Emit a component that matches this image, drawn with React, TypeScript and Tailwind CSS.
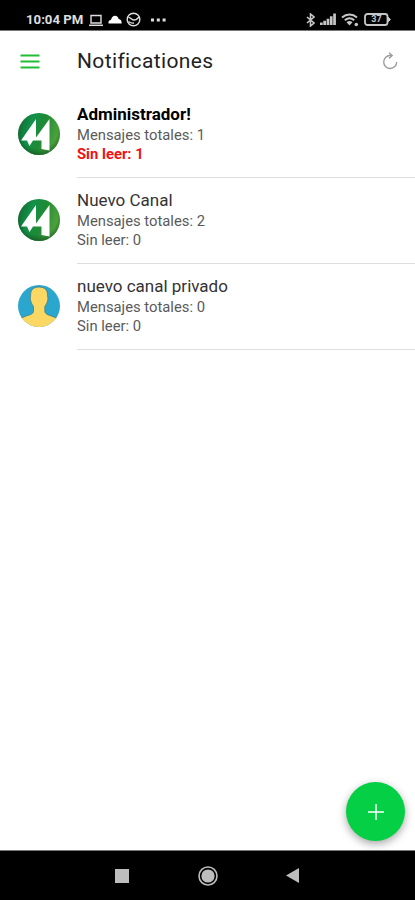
import { clsx } from 'clsx'

interface Channel {
  id: number
  name: string
  total: number
  unread: number
  avatar: 'logo' | 'person'
}

const channels: Channel[] = [
  { id: 1, name: 'Administrador!', total: 1, unread: 1, avatar: 'logo' },
  { id: 2, name: 'Nuevo Canal', total: 2, unread: 0, avatar: 'logo' },
  { id: 3, name: 'nuevo canal privado', total: 0, unread: 0, avatar: 'person' },
]

function LogoAvatar({ id }: { id: number }) {
  return (
    <svg className="size-[42px]" viewBox="0 0 42 42">
      <defs>
        <linearGradient id={`logo-${id}`} x1="0" y1="0" x2="1" y2="0.3">
          <stop offset="0" stopColor="#14602a" />
          <stop offset="0.35" stopColor="#12914a" />
          <stop offset="0.65" stopColor="#1f8a35" />
          <stop offset="1" stopColor="#4da33b" />
        </linearGradient>
        <radialGradient id={`shade-${id}`} cx="0.5" cy="0.42" r="0.58">
          <stop offset="0.75" stopColor="#0c4a1c" stopOpacity="0" />
          <stop offset="1" stopColor="#0c4a1c" stopOpacity="0.6" />
        </radialGradient>
      </defs>
      <circle cx="21" cy="21" r="21" fill={`url(#logo-${id})`} />
      <circle cx="21" cy="21" r="21" fill={`url(#shade-${id})`} />
      <path d="M18 6v18.500L31.500 6v31.500L23.500 36v-8.500H15L11.500 33 9 27.500H3z" fill="#fff" />
    </svg>
  )
}

function PersonAvatar() {
  return (
    <svg className="size-[42px]" viewBox="0 0 42 42">
      <defs>
        <clipPath id="person">
          <circle cx="21" cy="21" r="21" />
        </clipPath>
      </defs>
      <g clipPath="url(#person)">
        <path d="M0 0h42v42H0z" fill="#2ba6cf" />
        <path
          d="M21 2c6 0 8.800 3.500 8.500 8.500-.1 1.500.8 2.500.3 4.500-.5 2.500-1.500 4.500-3 6.500v5c.5 2.500 2.500 3 5.700 4.200 3.500 1.200 6 2.300 9.500 4.300v9H0v-9c3-2 5.500-3.100 9-4.300 3.500-1.200 6-1.700 6.500-4.200v-5c-1.500-2-2.500-4-3-6.500-.5-2 .2-3 .1-4.500C12.300 5.500 15 2 21 2z"
          fill="#fbd763"
          stroke="#3f7f86"
          strokeWidth="0.8"
        />
      </g>
    </svg>
  )
}

function StatusBar() {
  return (
    <div className="flex h-[31px] items-start justify-between border-b border-[#777] bg-black pt-[10px] pr-[24px] pl-[26px] text-[#dedede]">
      <div className="flex h-[19px] items-center">
        <span className="w-[58px] text-[13.2px] leading-[19px] font-bold whitespace-nowrap">10:04 PM</span>
        <svg className="ml-[4px] h-[14px] w-[16px]" viewBox="0 0 16 14" fill="none" stroke="currentColor">
          <path d="M3 2.500h10v7.500H3z" strokeWidth="1.400" />
          <path d="M1 12.300h14" strokeWidth="1.500" />
        </svg>
        <svg className="ml-[4px] h-[9px] w-[14px]" viewBox="0 0 14 9">
          <path d="M.5 8.500C.2 6.200 1 5 3 4.700 4 1.700 5 .7 7 .7c2.200 0 3.200 1.700 3.700 3.300 2 .3 3 1.800 3 4.500z" fill="#fff" />
        </svg>
        <svg className="ml-[4px] size-[15px]" viewBox="0 0 15 15" fill="none" stroke="currentColor">
          <circle cx="7.500" cy="7.500" r="6.300" strokeWidth="1.400" />
          <path d="M2.500 5l4.500 2.800c2 .8 4-.3 6-2.800M2.500 9.500c2 1.500 3.500 2 5.500 1.500" strokeWidth="1.400" />
        </svg>
        <svg className="ml-[10px] h-[4px] w-[15px]" viewBox="0 0 15 4" fill="currentColor">
          <path d="M0 .5h3v3H0zM5.800.5h3v3h-3zM11.600.5h3v3h-3z" />
        </svg>
      </div>

      <div className="flex h-[19px] items-center text-[#c6c6c6]">
        <svg className="h-[14px] w-[9px]" viewBox="0 0 9 14" fill="none" stroke="currentColor" strokeWidth="1.600">
          <path d="M1 4l7 6-3.500 3V1L8 4l-7 6" />
        </svg>
        <svg className="ml-[5px] h-[13px] w-[16px]" viewBox="0 0 16 13" fill="currentColor">
          <path d="M0 9.500h2.700V12H0zM3.300 7.800H6V12H3.300zM6.600 5.800h2.700V12H6.600zM9.900 3.300h2.700V12H9.900zM13.200.5h2.700V12h-2.700z" />
        </svg>
        <svg className="ml-[5px] h-[14px] w-[18px]" viewBox="0 0 18 14" fill="none" stroke="currentColor" strokeWidth="2">
          <path d="M1 4.500c4.500-4 10.500-4 15 0M3.800 7.300c3-2.500 6.500-2.500 9.400 0" />
          <path d="M5.500 9.200c2-1.600 4-1.600 6 0l-3 3.300z" fill="currentColor" stroke="none" />
          <circle cx="15.300" cy="11.500" r="1.800" fill="currentColor" stroke="none" />
        </svg>
        <div className="relative ml-[5px] flex h-[13px] w-[27px] items-center">
          <svg className="h-[13px] w-[27px]" viewBox="0 0 27 13" fill="none" stroke="currentColor">
            <rect x="1" y="1" width="22.500" height="11" rx="2.500" strokeWidth="1.800" />
            <path d="M24 4l2.500 2.500L24 9z" fill="currentColor" />
          </svg>
          <span className="absolute inset-y-0 left-0 w-[25px] text-center text-[9px] leading-[13px] font-bold">37</span>
        </div>
      </div>
    </div>
  )
}

function ChannelRow({ channel }: { channel: Channel }) {
  const hasUnread = channel.unread > 0
  return (
    <li className="flex h-[86px] pl-[18px]">
      <div className="w-[59px] pt-[21px]">
        {channel.avatar === 'logo' ? <LogoAvatar id={channel.id} /> : <PersonAvatar />}
      </div>
      <div className="flex-1 border-b border-[#dedede] pt-[12px] text-[14.8px] leading-[20px] text-[#5a5a5a]">
        <h2 className={clsx('mb-px text-[17px]', hasUnread ? 'font-bold text-black' : 'text-[#333]')}>{channel.name}</h2>
        <p>Mensajes totales: {channel.total}</p>
        <p className={clsx('-mt-px', hasUnread && 'font-bold text-[#f01212]')}>Sin leer: {channel.unread}</p>
      </div>
    </li>
  )
}

export default function App() {
  return (
    <div className="flex h-[900px] w-[415px] flex-col bg-white font-[Roboto,sans-serif]">
      <StatusBar />

      <header className="flex h-[61px] items-center pr-[17px] pb-[2px] pl-[20px]">
        <svg className="mt-[1px] h-[15px] w-[20px]" viewBox="0 0 20 15" stroke="#22bd37" strokeWidth="2">
          <path d="M0.500 1.500h19M0.500 7.500h19M0.500 13.500h19" />
        </svg>
        <h1 className="ml-[37px] flex-1 text-[21px] leading-[24px] tracking-[0.37px] text-[#222]">Notificationes</h1>
        <svg className="mt-[1px] h-[18px] w-[16px]" viewBox="0 0 16 18" fill="none" stroke="#999" strokeWidth="1.300">
          <path d="M9.500 3.500H8a6.500 6.500 0 1 0 6.700 6.500" />
          <path d="M7 .8l3.200 2.700L7 6.500" />
        </svg>
      </header>

      <ul>
        {channels.map((channel) => (
          <ChannelRow key={channel.id} channel={channel} />
        ))}
      </ul>

      {/* Add channel button */}
      <div className="flex flex-1 items-end justify-end pr-[10px] pb-[9px]">
        <button className="flex size-[59px] items-center justify-center rounded-full bg-[#04cf45] shadow-[0_3px_8px_rgba(0,0,0,0.35)]">
          <svg className="size-[16px]" viewBox="0 0 16 16" stroke="#fff" strokeWidth="1.500">
            <path d="M8 0v16M0 8h16" />
          </svg>
        </button>
      </div>

      {/* Android navigation */}
      <nav className="flex h-[50px] items-center border-t border-[#777] bg-black pl-[115px] text-[#bdbdbd]">
        <div className="size-[14px] bg-[#bdbdbd]" />
        <svg className="ml-[69px] size-[20px]" viewBox="0 0 20 20">
          <circle cx="10" cy="10" r="9" fill="none" stroke="currentColor" strokeWidth="1.600" />
          <circle cx="10" cy="10" r="6.600" fill="currentColor" />
        </svg>
        <svg className="ml-[68px] h-[15px] w-[13px]" viewBox="0 0 13 15">
          <path d="M13 0v15L0 7.500z" fill="currentColor" />
        </svg>
      </nav>
    </div>
  )
}
